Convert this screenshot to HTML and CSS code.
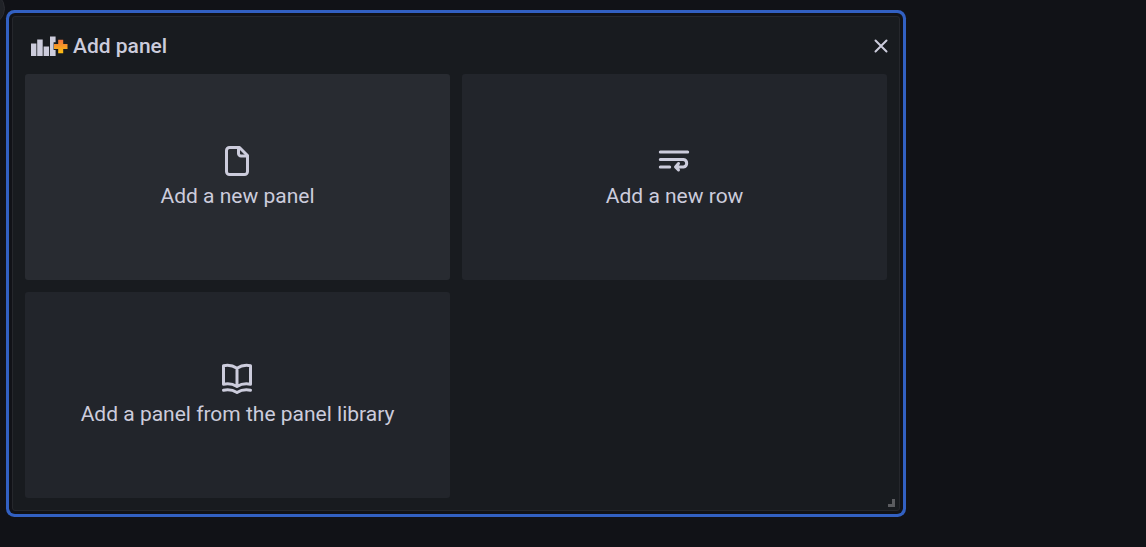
FILE: index.html
```
<!DOCTYPE html>
<html lang="en">
<head>
<meta charset="utf-8">
<title>Add panel</title>
<link rel="stylesheet" href="styles.css">
</head>
<body>
<span class="nav-toggle"></span>
<main class="dashboard">
  <section class="panel" aria-labelledby="panel-title">
    <header class="panel-header">
      <svg class="panel-logo" viewBox="0 0 36 20" aria-hidden="true">
        <defs>
          <linearGradient id="plus-fill" x1="0" y1="0" x2="0" y2="1">
            <stop offset="0" stop-color="#f0713c"/>
            <stop offset="1" stop-color="#fcc012"/>
          </linearGradient>
        </defs>
        <path class="bar" d="M0 7.500h5.400v12.500h-5.400zM6.200 3.500h5.500v16.500h-5.500zM12.600 10.500h5.500v9.500h-5.500zM19 .5h5.600v5.700h-2v7.800h2v6h-5.600z"/>
        <path fill="url(#plus-fill)" d="M27.200 3.800h5v4.300h4.300v4.800h-4.300v4.300h-5v-4.300h-4.200v-4.800h4.200z"/>
      </svg>
      <h1 class="panel-title" id="panel-title">Add panel</h1>
      <button class="close" type="button" aria-label="Close">
        <svg class="close-icon" viewBox="0 0 14 14"><path d="M1.500 1.500l11 11M12.500 1.500l-11 11"/></svg>
      </button>
    </header>
    <div class="actions">
      <button class="action action-active" type="button">
        <svg class="action-icon" viewBox="0 -1 38 38" aria-hidden="true">
          <path d="M20.500 4.500H10.500a3 3 0 0 0-3 3v21a3 3 0 0 0 3 3h15a3 3 0 0 0 3-3V12.500z"/>
          <path d="M19.500 4.500v6a2.500 2.500 0 0 0 2.500 2.500h6"/>
        </svg>
        <span>Add a new panel</span>
      </button>
      <button class="action" type="button">
        <svg class="action-icon" viewBox="0 -1 38 38" aria-hidden="true">
          <path d="M4.300 9h27.400M4.300 16.500h23.200a3.800 3.800 0 0 1 0 7.500H20M4.300 24h9.400M22.500 20.500L19.500 24l3 3"/>
        </svg>
        <span>Add a new row</span>
      </button>
      <button class="action" type="button">
        <svg class="action-icon" viewBox="0 -1 38 38" aria-hidden="true">
          <path d="M4.500 4.700q7.500-1.500 13.500 2.500 6-4 13.500-2.500v18.500q-7.500-1.500-13.500 2.300-6-3.800-13.500-2.300zM18 7.500v17.500M4.500 29.200q7.500-1.500 13.500 2.300 6-3.800 13.500-2.300"/>
        </svg>
        <span>Add a panel from the panel library</span>
      </button>
    </div>
    <span class="resize-handle"></span>
  </section>
</main>
</body>
</html>
```
FILE: styles.css
```
* {
  box-sizing: border-box;
}

body {
  margin: 0;
  background: #111217;
  color: #ccccdc;
  font-family: Roboto, "Liberation Sans", sans-serif;
}

.nav-toggle {
  position: absolute;
  top: -8px;
  left: -28px;
  width: 33px;
  height: 33px;
  border: 1px solid #2b2c32;
  border-radius: 50%;
  background: #202227;
}

.dashboard {
  padding: 16px 12px;
}

.panel {
  position: relative;
  width: 77.5vw;
  padding: 0 12px 12px;
  border: 1px solid #25272c;
  border-radius: 3px;
  background: #181b1f;
  box-shadow: 0 0 0 3px #111217, 0 0 0 6px #3260c2;
}

.panel-header {
  display: flex;
  align-items: center;
  gap: 6px;
  height: 57px;
  padding-left: 6px;
}

.panel-logo {
  width: 36px;
  height: 20px;
  overflow: visible;
}

.bar {
  fill: #ccccdc;
}

.panel-title {
  flex: 1;
  margin: 0;
  font-size: 21px;
  font-weight: 500;
  line-height: 28px;
}

.close {
  display: flex;
  align-items: center;
  justify-content: center;
  width: 12px;
  height: 24px;
  padding: 0;
  border: 0;
  background: none;
  color: inherit;
}

.close-icon {
  flex: none;
  width: 14px;
  height: 14px;
  fill: none;
  stroke: currentColor;
  stroke-width: 2;
  stroke-linecap: round;
}

.actions {
  display: grid;
  grid-template-columns: 1fr 1fr;
  gap: 12px;
}

.action {
  display: flex;
  flex-direction: column;
  align-items: center;
  justify-content: center;
  height: 206px;
  padding: 0;
  border: 0;
  border-radius: 3px;
  background: #22252b;
  color: inherit;
  font-family: inherit;
  font-size: 21px;
  line-height: 32px;
}

.action-active {
  background: #282b31;
}

.action-icon {
  width: 38px;
  height: 38px;
  fill: none;
  stroke: currentColor;
  stroke-width: 3;
  stroke-linecap: round;
  stroke-linejoin: round;
}

.resize-handle {
  position: absolute;
  right: 4px;
  bottom: 3px;
  width: 7px;
  height: 8px;
  border-right: 3px solid #5b5c60;
  border-bottom: 3px solid #5b5c60;
}
```
